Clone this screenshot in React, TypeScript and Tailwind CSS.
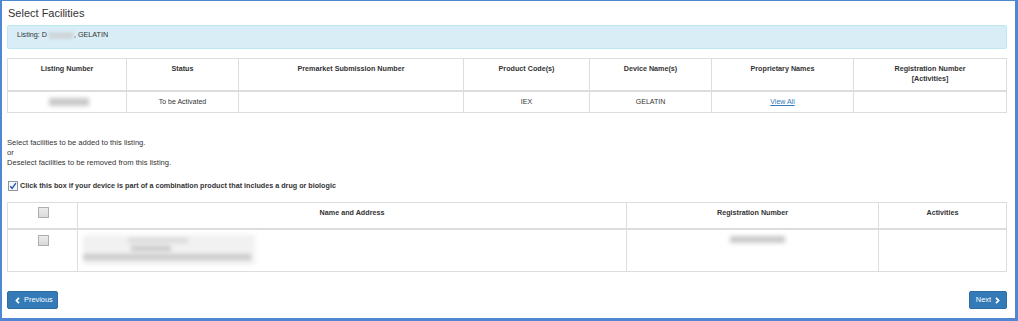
import React from "react";

const listingCols = [
  { key: "listing", w: "w-[119px]", label: "Listing Number" },
  { key: "status", w: "w-[112px]", label: "Status" },
  { key: "premarket", w: "w-[225px]", label: "Premarket Submission Number" },
  { key: "code", w: "w-[126px]", label: "Product Code(s)" },
  { key: "device", w: "w-[122px]", label: "Device Name(s)" },
  { key: "prop", w: "w-[142px]", label: "Proprietary Names" },
  { key: "reg", w: "w-[153px]", label: "Registration Number" },
];

const facilityCols = ["w-[70px]", "w-[549px]", "w-[252px]", "w-[128px]"];

function Box({ checked = false }: { checked?: boolean }) {
  if (checked) {
    return (
      <span className="flex h-[10px] w-[10px] shrink-0 items-center justify-center border border-[#8c95a3] bg-[#f4f6f9]">
        <svg width="8" height="8" viewBox="0 0 8 8" fill="none">
          <path d="M1.2 4.2 L3.1 6.3 L6.9 1.2" stroke="#2456b0" strokeWidth="1.4" />
        </svg>
      </span>
    );
  }
  return (
    <span className="block h-[11px] w-[11px] border border-[#aeaeae] bg-gradient-to-b from-[#ececec] to-[#d9d9d9]" />
  );
}

function Chevron({ dir }: { dir: "left" | "right" }) {
  return (
    <svg width="5" height="7" viewBox="0 0 5 7" fill="none">
      <path
        d={dir === "left" ? "M4 0.8 L1.4 3.5 L4 6.2" : "M1 0.8 L3.6 3.5 L1 6.2"}
        stroke="white"
        strokeWidth="1.7"
      />
    </svg>
  );
}

export default function App() {
  const cell = "border-r border-b border-[#ddd] px-[5px] pt-[5px] pb-[5px] align-top text-center";
  const headCell = "border-r border-b-2 border-[#ddd] px-[5px] pt-[5px] align-top text-center text-[7.2px] font-bold";

  return (
    <div className="h-[321px] w-[1018px] border-t border-r-[3px] border-b-[3px] border-l-2 border-[#4f87d3] bg-white pl-[5px] pr-[8px] font-['Liberation_Sans',Arial,sans-serif] text-[7px] leading-[10px] text-[#333]">
      <h4 className="pl-[1px] pt-[6px] text-[11px] leading-[12px] text-[#333]">Select Facilities</h4>

      {/* listing banner */}
      <div className="mt-[6px] flex items-center rounded-[2px] border border-[#bce8f1] bg-[#d9edf7] pb-[8px] pl-[9px] pt-[4px] text-[7.2px]">
        <span>Listing: D</span>
        <span className="ml-[2px] mr-[1px] inline-block h-[7px] w-[24px] bg-[#cfd6da] blur-[1.5px]" />
        <span>, GELATIN</span>
      </div>

      <table className="mt-[9px] w-[1000px] table-fixed border-separate border-spacing-0 border-t border-l border-[#ddd]">
        <colgroup>
          {listingCols.map((c) => (
            <col key={c.key} className={c.w} />
          ))}
        </colgroup>
        <thead>
          <tr>
            {listingCols.map((c) => (
              <th key={c.key} className={`${headCell} pb-[6px]`}>
                {c.key === "reg" ? (
                  <>
                    Registration Number
                    <br />
                    [Activities]
                  </>
                ) : (
                  <>
                    {c.label}
                    <br />
                    &nbsp;
                  </>
                )}
              </th>
            ))}
          </tr>
        </thead>
        <tbody>
          <tr>
            <td className={cell}>
              <div className="flex h-[10px] items-center justify-center pl-[4px]">
                <span className="h-[8px] w-[40px] bg-[#c9c9c9] blur-[2px]" />
              </div>
            </td>
            <td className={cell}>To be Activated</td>
            <td className={cell}></td>
            <td className={cell}>IEX</td>
            <td className={cell}>GELATIN</td>
            <td className={cell}>
              <a href="#" className="text-[#337ab7] underline">
                View All
              </a>
            </td>
            <td className={cell}></td>
          </tr>
        </tbody>
      </table>

      <p className="mt-[25px] text-[7.6px]">
        Select facilities to be added to this listing.
        <br />
        or
        <br />
        Deselect facilities to be removed from this listing.
      </p>

      <label className="mt-[13px] flex items-center gap-[2px] pl-[1px] text-[7.2px] font-bold">
        <Box checked />
        Click this box if your device is part of a combination product that includes a drug or biologic
      </label>

      <table className="mt-[11px] w-[1000px] table-fixed border-separate border-spacing-0 border-t border-l border-[#ddd]">
        <colgroup>
          {facilityCols.map((w) => (
            <col key={w} className={w} />
          ))}
        </colgroup>
        <thead>
          <tr>
            <th className="border-r border-b-2 border-[#ddd] pt-[4px] align-top">
              <div className="flex justify-center pl-[1px]">
                <Box />
              </div>
            </th>
            <th className={`${headCell} pb-[10px]`}>Name and Address</th>
            <th className={`${headCell} pb-[10px]`}>Registration Number</th>
            <th className={`${headCell} pb-[10px]`}>Activities</th>
          </tr>
        </thead>
        <tbody>
          <tr>
            <td className="border-r border-b border-[#ddd] pt-[5px] align-top">
              <div className="flex justify-center pl-[1px]">
                <Box />
              </div>
            </td>
            <td className="border-r border-b border-[#ddd] px-[5px] pt-[5px] pb-[6px] align-top">
              <div className="flex h-[30px] w-[172px] flex-col gap-[3px] bg-[#f1f1f1] pt-[3px] blur-[2px]">
                <div className="ml-[45px] h-[5px] w-[60px] bg-[#dadada]" />
                <div className="ml-[48px] h-[5px] w-[40px] bg-[#c8c8c8]" />
                <div className="h-[6px] w-[168px] bg-[#cbcbcb]" />
              </div>
            </td>
            <td className="border-r border-b border-[#ddd] px-[5px] pt-[5px] pb-[6px] align-top">
              <div className="flex justify-center pl-[10px]">
                <span className="mt-[1px] h-[7px] w-[55px] bg-[#cacaca] blur-[2px]" />
              </div>
            </td>
            <td className="border-r border-b border-[#ddd]"></td>
          </tr>
        </tbody>
      </table>

      <div className="mt-[19px] flex justify-between text-[7.4px]">
        <button className="flex h-[18px] items-center gap-[4px] rounded-[2px] border border-[#2e6da4] bg-[#337ab7] pl-[7px] pr-[4px] text-white">
          <Chevron dir="left" />
          Previous
        </button>
        <button className="flex h-[18px] items-center gap-[4px] rounded-[2px] border border-[#2e6da4] bg-[#337ab7] pl-[6px] pr-[6px] text-white">
          Next
          <Chevron dir="right" />
        </button>
      </div>
    </div>
  );
}
